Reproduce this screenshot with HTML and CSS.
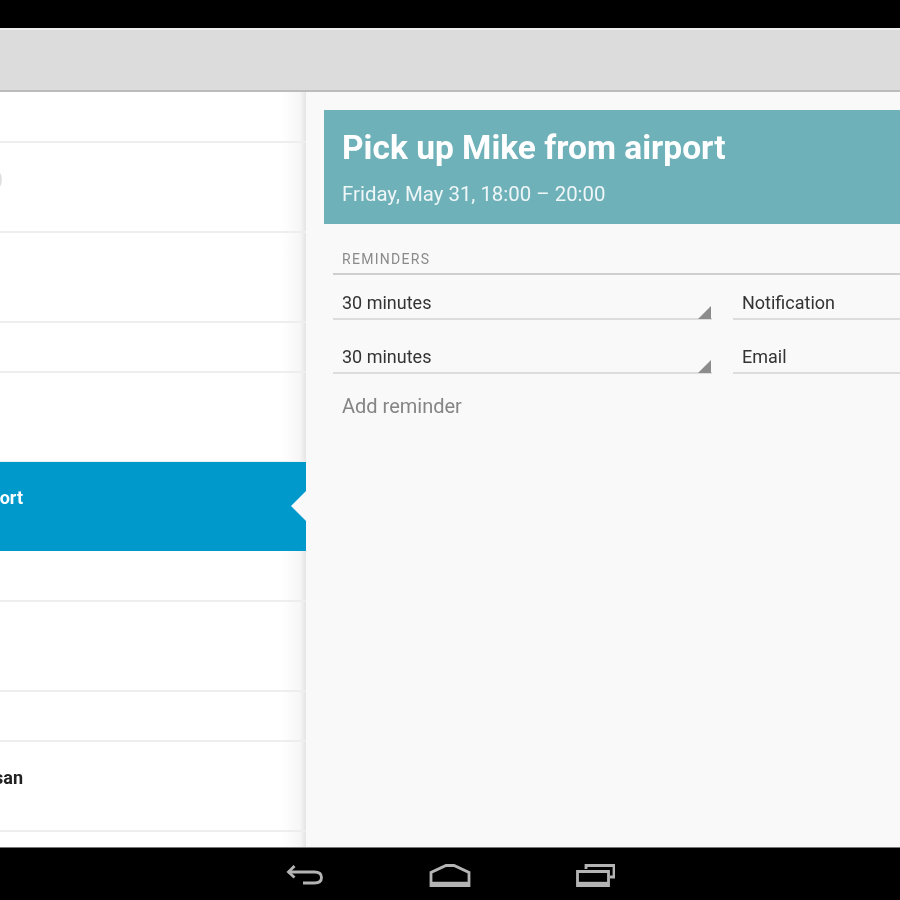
FILE: index.html
```html
<!DOCTYPE html>
<html lang="en">
<head>
<meta charset="utf-8">
<title>Calendar event</title>
<link rel="stylesheet" href="styles.css">
</head>
<body>
<div class="screen">
  <div class="status"></div>
  <div class="actionbar"></div>
  <main class="main">
    <section class="list">
      <div class="row first"></div>
      <div class="row tall"><div class="clip tiny"><span class="name faint">)</span></div></div>
      <div class="row tall"></div>
      <div class="row short"></div>
      <div class="row tall"></div>
      <div class="row selected"><div class="clip"><span class="name">Pick up Mike from airport</span></div><span class="notch"></span></div>
      <div class="row first"></div>
      <div class="row tall"></div>
      <div class="row short"></div>
      <div class="row tall"><div class="clip"><span class="name">Lunch with Susan</span></div></div>
      <div class="row rest"></div>
    </section>
    <section class="detail">
      <header class="hero">
        <h1 class="title">Pick up Mike from airport</h1>
        <p class="when">Friday, May 31, 18:00 – 20:00</p>
      </header>
      <div class="reminders">
        <h2 class="heading">REMINDERS</h2>
        <div class="pair">
          <div class="field spin">30 minutes</div>
          <div class="field method">Notification</div>
        </div>
        <div class="pair">
          <div class="field spin">30 minutes</div>
          <div class="field method">Email</div>
        </div>
        <div class="add">Add reminder</div>
      </div>
    </section>
  </main>
  <nav class="nav">
    <svg class="ico" width="40" height="26" viewBox="0 0 40 26" fill="none" stroke="#b4b4b4" stroke-width="2.8">
      <path d="M9.500 3 3.500 9l6 5.500"/><path d="M3.500 9h26c5 0 7 2.500 7 5.500s-2 5.500-7 5.500H18"/>
    </svg>
    <svg class="ico" width="42" height="26" viewBox="0 0 42 26" fill="none" stroke="#b4b4b4" stroke-width="2.8">
      <path d="M17 2.500h8L40 9.500V22.500H2V9.500z"/><path d="M2 20h38" stroke-width="2.400"/>
    </svg>
    <svg class="ico" width="40" height="26" viewBox="0 0 40 26" fill="none" stroke="#b4b4b4" stroke-width="2.8">
      <path d="M11 6V2.500h28V14h-4"/><path d="M2.500 8.500h31v14h-31z"/><path d="M2.500 20h31" stroke-width="2.400"/>
    </svg>
  </nav>
</div>
</body>
</html>
```
FILE: styles.css
```css
* { box-sizing: border-box; }
html, body { margin: 0; padding: 0; background: #000; }
.screen {
  width: 900px;
  height: 900px;
  display: flex;
  flex-direction: column;
  overflow: hidden;
  font-family: Roboto, "Liberation Sans", sans-serif;
  filter: blur(0.7px);
}
.status { height: 28px; background: #000; flex: none; }
.actionbar {
  height: 64px;
  flex: none;
  background: #dcdcdc;
  border-top: 2px solid #eeeeee;
  border-bottom: 2px solid #bcbcbc;
}
.main { height: 755px; flex: none; display: flex; background: #f9f9f9; }
.list {
  width: 306px;
  flex: none;
  display: flex;
  flex-direction: column;
  background: linear-gradient(to right, #fff 282px, #f6f6f6 300px, #e4e4e4 306px);
}
.row {
  position: relative;
  flex: none;
  display: flex;
  align-items: center;
  padding-bottom: 18px;
  border-bottom: 2px solid #eeeeee;
}
.first { height: 51px; }
.short { height: 50px; }
.tall { height: 90px; }
.rest { flex: 1; border-bottom: 0; }
.clip {
  width: 23px;
  display: flex;
  justify-content: flex-end;
  overflow: hidden;
  white-space: nowrap;
}
.tiny { width: 3px; }
.name { font-size: 18px; font-weight: 700; color: #222; flex: none; }
.faint { color: #ddd; font-weight: 400; }
.selected {
  height: 89px;
  margin-top: -1px;
  background: #0099cc;
  border-bottom: 0;
}
.selected .name { color: #fff; }
.notch {
  position: absolute;
  right: 0;
  top: 29px;
  width: 15px;
  height: 30px;
  background: #f9f9f9;
  clip-path: polygon(100% 0, 0 50%, 100% 100%);
}
.detail { flex: 1; min-width: 0; padding: 18px 0 0 18px; }
.hero {
  height: 114px;
  background: #6fb1b9;
  padding: 19px 18px 0 18px;
  color: #fff;
}
.title {
  margin: 0;
  font-size: 33.500px;
  line-height: 38px;
  font-weight: 700;
  white-space: nowrap;
}
.when {
  margin: 15px 0 0;
  font-size: 20.400px;
  line-height: 24px;
  color: #eef6f7;
}
.reminders { padding: 24px 0 0 9px; }
.heading {
  margin: 0;
  height: 27px;
  padding-left: 9px;
  border-bottom: 2px solid #cfcfcf;
  font-size: 14px;
  line-height: 22px;
  font-weight: 400;
  letter-spacing: 1.300px;
  color: #8a8a8a;
}
.pair { display: flex; gap: 21px; height: 54px; align-items: flex-end; }
.pair:first-of-type { height: 45px; }
.field {
  position: relative;
  height: 32px;
  padding-left: 9px;
  padding-top: 3px;
  border-bottom: 2px solid #dddddd;
  font-size: 18px;
  line-height: 24px;
  color: #333;
}
.spin { width: 379px; flex: none; }
.spin::after {
  content: "";
  position: absolute;
  right: 1px;
  bottom: -1px;
  width: 13px;
  height: 13px;
  background: #8c8c8c;
  clip-path: polygon(100% 0, 100% 100%, 0 100%);
}
.method { flex: 1; }
.add { margin-top: 18px; padding-left: 9px; font-size: 20px; line-height: 28px; color: #858585; }
.nav {
  height: 53px;
  flex: none;
  display: flex;
  align-items: flex-start;
  justify-content: center;
  gap: 104px;
  background: #000;
  border-top: 1px solid #777;
  padding: 15px 1px 0 0;
}
.ico { flex: none; }
```
